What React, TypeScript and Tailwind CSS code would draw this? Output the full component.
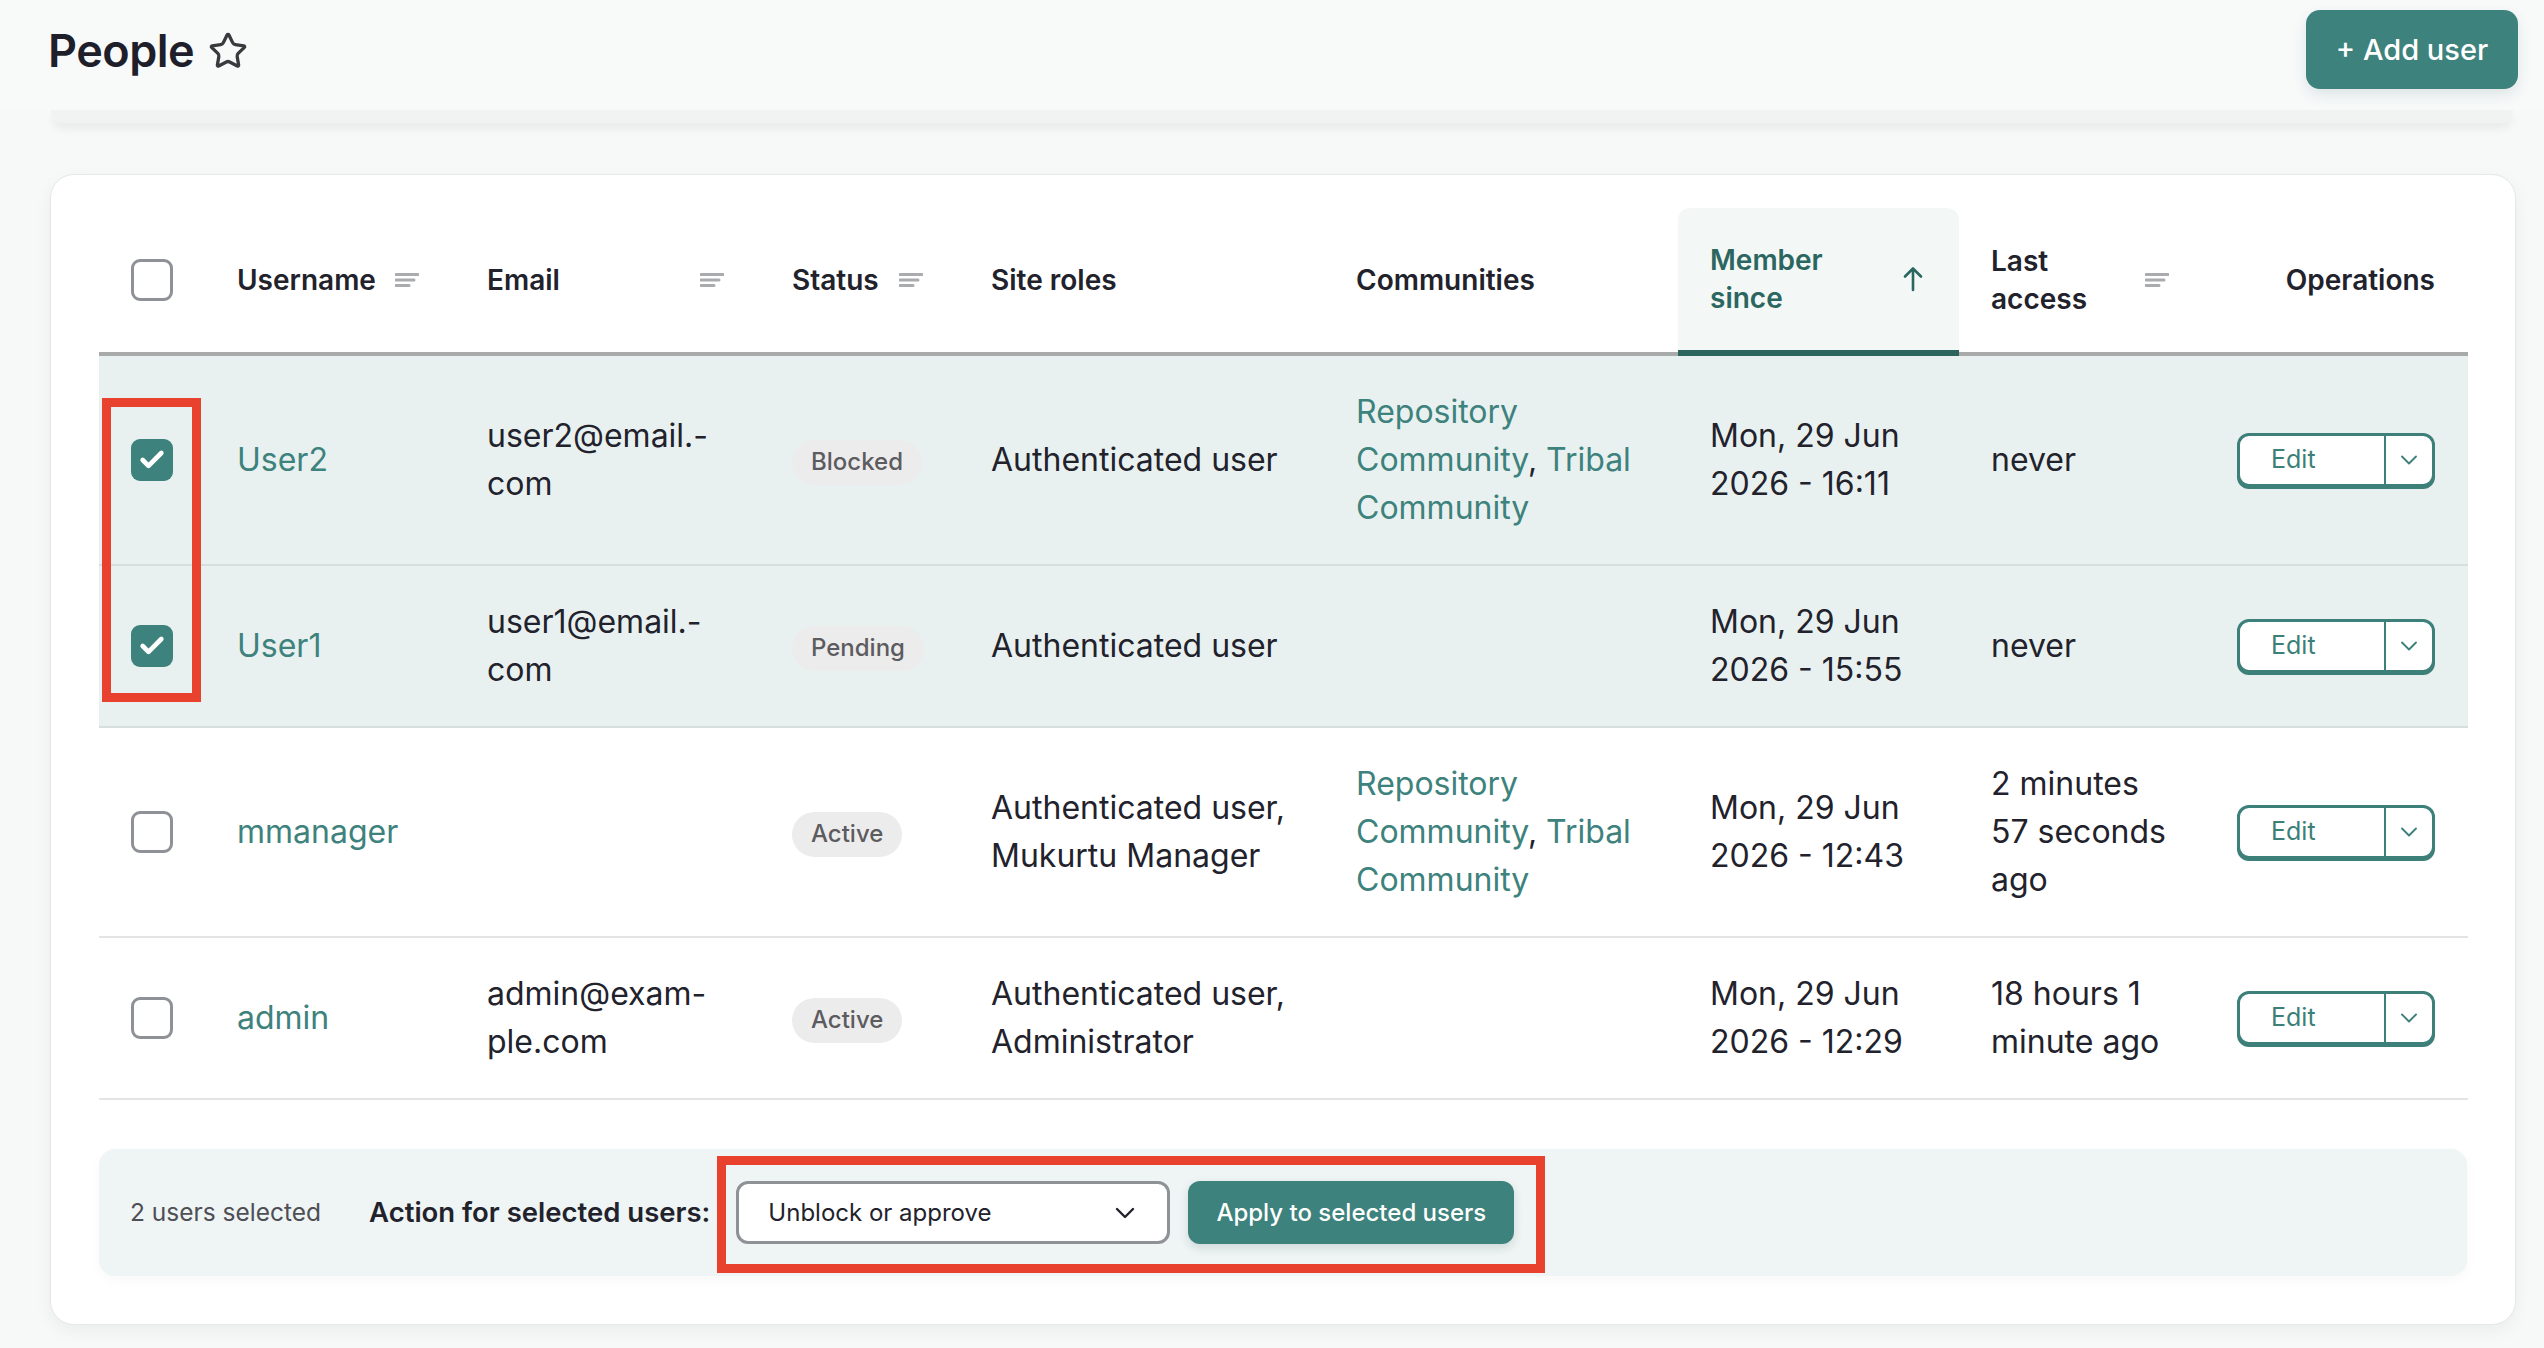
import React from "react";
import { Check, ChevronDown, Star } from "lucide-react";

function SortIcon() {
  return (
    <svg width="24" height="16" viewBox="0 0 24 16" className="shrink-0">
      <path d="M1 2.5H23M1 8H19M1 13.5H14" stroke="#a9abae" strokeWidth="3" strokeLinecap="round" />
    </svg>
  );
}

function ArrowUp() {
  return (
    <svg width="20" height="26" viewBox="0 0 20 26" className="shrink-0">
      <path d="M10 24V3M2 10.5L10 2.5L18 10.5" stroke="#2b6760" strokeWidth="2.6" fill="none" strokeLinecap="round" strokeLinejoin="round" />
    </svg>
  );
}

function Checkbox({ checked }: { checked?: boolean }) {
  return checked ? (
    <div className="flex h-[42px] w-[42px] items-center justify-center rounded-[9px] bg-[#3d827c]">
      <Check size={28} strokeWidth={4} color="#ffffff" />
    </div>
  ) : (
    <div className="h-[42px] w-[42px] rounded-[9px] border-[3px] border-[#8e9196] bg-white" />
  );
}

function Badge({ label }: { label: string }) {
  return (
    <span className="inline-flex h-[45px] items-center rounded-full bg-[#ececec] px-[19px] text-[24px] font-medium text-[#5c5c60]">
      {label}
    </span>
  );
}

function EditButton() {
  return (
    <div className="ml-auto flex h-[54px] w-[198px] overflow-hidden rounded-[12px] border-[3px] border-[#3d7f79] bg-white shadow-[0_2px_0_#3d7f79]">
      <div className="flex flex-1 items-center pl-[31px] text-[25px] font-normal text-[#3d7f79]">Edit</div>
      <div className="flex w-[48px] items-center justify-center border-l-[2px] border-[#3d7f79]">
        <ChevronDown size={28} strokeWidth={1.6} color="#3d7f79" />
      </div>
    </div>
  );
}

type Row = {
  checked: boolean;
  username: string;
  email: React.ReactNode;
  status: string;
  roles: React.ReactNode;
  communities: boolean;
  since: [string, string];
  last: React.ReactNode;
};

const rows: Row[] = [
  {
    checked: true,
    username: "User2",
    email: (
      <>
        user2@email.-
        <br />
        com
      </>
    ),
    status: "Blocked",
    roles: "Authenticated user",
    communities: true,
    since: ["Mon, 29 Jun", "2026 - 16:11"],
    last: "never",
  },
  {
    checked: true,
    username: "User1",
    email: (
      <>
        user1@email.-
        <br />
        com
      </>
    ),
    status: "Pending",
    roles: "Authenticated user",
    communities: false,
    since: ["Mon, 29 Jun", "2026 - 15:55"],
    last: "never",
  },
  {
    checked: false,
    username: "mmanager",
    email: "",
    status: "Active",
    roles: (
      <>
        Authenticated user,
        <br />
        Mukurtu Manager
      </>
    ),
    communities: true,
    since: ["Mon, 29 Jun", "2026 - 12:43"],
    last: (
      <>
        2 minutes
        <br />
        57 seconds
        <br />
        ago
      </>
    ),
  },
  {
    checked: false,
    username: "admin",
    email: (
      <>
        admin@exam-
        <br />
        ple.com
      </>
    ),
    status: "Active",
    roles: (
      <>
        Authenticated user,
        <br />
        Administrator
      </>
    ),
    communities: false,
    since: ["Mon, 29 Jun", "2026 - 12:29"],
    last: (
      <>
        18 hours 1
        <br />
        minute ago
      </>
    ),
  },
];

export default function App() {
  const th = "border-b-[4px] border-[#a9abaa] py-[33px] pl-[32px] pr-[36px] text-left align-middle text-[28px] font-semibold leading-[38px] text-[#22222c]";
  return (
    <div className="min-h-screen bg-[#f7f9f9] pb-[24px] font-['Inter',sans-serif] text-[#22222c]">
      {/* Sticky header */}
      <div className="flex h-[110px] items-start justify-between bg-[#f8fafa] pl-[48px] pr-[26px] pt-[10px]">
        <div className="flex h-[80px] items-center gap-[14px]">
          <h1 className="text-[45px] font-semibold leading-none tracking-[-0.5px] text-[#1f1f2b]">People</h1>
          <Star size={40} strokeWidth={2} color="#3a3a3e" className="mt-[2px]" />
        </div>
        <button className="flex h-[79px] w-[212px] items-center justify-center rounded-[14px] bg-[#3d827c] text-[29px] font-medium text-white shadow-[0_6px_14px_rgba(30,70,70,0.12)]">
          + Add user
        </button>
      </div>
      <div className="ml-[51px] mr-[31px] h-[13px] rounded-b-[16px] bg-[#f1f2f2] shadow-[0_6px_10px_rgba(0,0,0,0.06)]" />

      {/* Card */}
      <div className="ml-[50px] mr-[28px] mt-[51px] rounded-[24px] border border-[#e6e8e8] bg-white px-[48px] pb-[48px] pt-[33px] shadow-[0_6px_18px_rgba(0,0,0,0.05)]">
        <div className="relative">
          <table className="w-full table-fixed border-separate border-spacing-0">
            <colgroup>
              <col className="w-[106px]" />
              <col className="w-[250px]" />
              <col className="w-[305px]" />
              <col className="w-[199px]" />
              <col className="w-[365px]" />
              <col className="w-[354px]" />
              <col className="w-[281px]" />
              <col className="w-[246px]" />
              <col className="w-[263px]" />
            </colgroup>
            <thead>
              <tr>
                <th className={th + " pl-[31px]"}>
                  <Checkbox />
                </th>
                <th className={th}>
                  <div className="flex items-center justify-between">
                    <span>Username</span>
                    <SortIcon />
                  </div>
                </th>
                <th className={th}>
                  <div className="flex items-center justify-between">
                    <span>Email</span>
                    <SortIcon />
                  </div>
                </th>
                <th className={th}>
                  <div className="flex items-center justify-between">
                    <span>Status</span>
                    <SortIcon />
                  </div>
                </th>
                <th className={th}>Site roles</th>
                <th className={th}>Communities</th>
                <th className="rounded-t-[12px] border-b-[6px] border-[#2c645e] bg-[#f3f7f6] py-[33px] pl-[32px] pr-[36px] text-left align-middle text-[28px] font-semibold leading-[38px] text-[#2b6760]">
                  <div className="flex items-center justify-between">
                    <span>
                      Member
                      <br />
                      since
                    </span>
                    <ArrowUp />
                  </div>
                </th>
                <th className={th}>
                  <div className="flex items-center justify-between">
                    <span>
                      Last
                      <br />
                      access
                    </span>
                    <SortIcon />
                  </div>
                </th>
                <th className="border-b-[4px] border-[#a9abaa] py-[33px] pl-[32px] pr-[33px] text-right align-middle text-[28px] font-semibold leading-[38px] text-[#22222c]">
                  Operations
                </th>
              </tr>
            </thead>
            <tbody>
              {rows.map((r, i) => {
                const bg = r.checked ? "bg-[#e9f1f0]" : "bg-white";
                const bd = r.checked ? "border-[#d6dfde]" : "border-[#e3e4e4]";
                const td = `${bg} border-b-[2px] ${bd} py-[32px] pl-[32px] pr-[16px] align-middle text-[32px] leading-[48px] text-[#22222c]`;
                return (
                  <tr key={i}>
                    <td className={td + " pl-[31px]"}>
                      <Checkbox checked={r.checked} />
                    </td>
                    <td className={td}>
                      <span className="text-[#3d827c]">{r.username}</span>
                    </td>
                    <td className={td}>{r.email}</td>
                    <td className={td}>
                      <Badge label={r.status} />
                    </td>
                    <td className={td}>{r.roles}</td>
                    <td className={td}>
                      {r.communities ? (
                        <span className="text-[#3d827c]">
                          Repository
                          <br />
                          Community<span className="text-[#22222c]">,</span> Tribal
                          <br />
                          Community
                        </span>
                      ) : null}
                    </td>
                    <td className={td}>
                      {r.since[0]}
                      <br />
                      {r.since[1]}
                    </td>
                    <td className={td}>{r.last}</td>
                    <td className={`${bg} border-b-[2px] ${bd} py-[32px] pl-[32px] pr-[33px] align-middle`}>
                      <EditButton />
                    </td>
                  </tr>
                );
              })}
            </tbody>
          </table>
          {/* annotation around selected checkboxes */}
          <div className="pointer-events-none absolute left-[3px] top-[190px] h-[304px] w-[99px] border-[9px] border-[#e8412e]" />
        </div>

        {/* Bulk actions bar */}
        <div className="relative mt-[49px] flex h-[127px] items-center rounded-[16px] bg-[#eff4f4] pl-[31px] shadow-[0_4px_12px_rgba(0,0,0,0.03)]">
          <span className="text-[24.5px] text-[#4e4e55]">2 users selected</span>
          <span className="ml-[48px] text-[27.5px] font-semibold text-[#22222c]">Action for selected users:</span>
          <div className="ml-[26px] flex h-[63px] w-[434px] items-center justify-between rounded-[12px] border-[3px] border-[#8e9196] bg-white pl-[29px] pr-[26px]">
            <span className="text-[24px] text-[#22222c]">Unblock or approve</span>
            <ChevronDown size={32} strokeWidth={1.8} color="#22222c" />
          </div>
          <button className="ml-[18px] flex h-[63px] w-[326px] items-center justify-center rounded-[12px] bg-[#3d827c] text-[24px] font-medium text-white shadow-[0_4px_10px_rgba(30,70,70,0.15)]">
            Apply to selected users
          </button>
          <div className="pointer-events-none absolute left-[618px] top-[7px] h-[117px] w-[828px] border-[9px] border-[#e8412e]" />
        </div>
      </div>
    </div>
  );
}
